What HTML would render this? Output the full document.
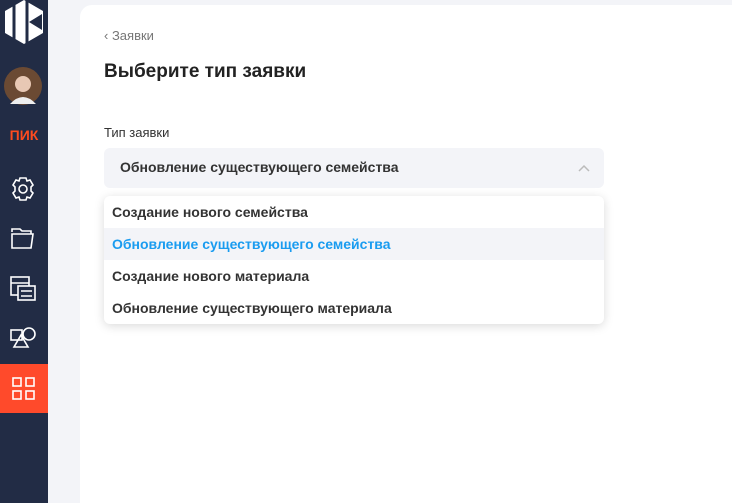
<!DOCTYPE html>
<html><head><meta charset="utf-8"><style>
*{margin:0;padding:0;box-sizing:border-box}
html,body{width:732px;height:503px;overflow:hidden}
body{background:#f3f4f8;font-family:"Liberation Sans",sans-serif;position:relative}
.sb{position:absolute;left:0;top:0;width:48px;height:503px;background:#222c45}
.card{position:absolute;left:80px;top:5px;width:652px;height:498px;background:#fff;border-radius:12px 0 0 0}
.t{position:absolute;white-space:nowrap}
.dd{position:absolute;left:104px;top:196px;width:500px;height:128px;background:#fff;border-radius:6px;box-shadow:0 2px 10px rgba(0,0,0,.15)}
.it{height:32px;line-height:32px;padding-left:8px;font-size:14px;color:#333;font-weight:bold}
</style></head><body>
<div class="sb">
<svg width="48" height="420" viewBox="0 0 48 420" style="position:absolute;left:0;top:0">
<polygon points="24,0 43,11 43,33 24,44 5,33 5,11" fill="#fff"/>
<path d="M14 4v40M27 0v44" stroke="#222c45" stroke-width="3"/>
<polygon points="29,22 42,14 42,30" fill="#222c45"/>
<circle cx="23" cy="86" r="19" fill="#6b4a33"/>
<circle cx="23" cy="84" r="8" fill="#e8c8b4"/>
<path d="M10 104 Q23 90 36 104 Z" fill="#eee"/>
<text x="24" y="140" font-size="14" font-weight="bold" fill="#ff4b1f" text-anchor="middle" font-family="Liberation Sans">ПИК</text>
<g fill="none" stroke="#fff" stroke-width="1.6">
<circle cx="23" cy="189" r="4"/>
<path d="M20 178h6l1 3 3-1 3 5-2 2 0 4 2 2-3 5-3-1-1 3h-6l-1-3-3 1-3-5 2-2 0-4-2-2 3-5 3 1z"/>
<path d="M12 232v-3h8l2 2h9v3M12 234h21l-2 14h-19z"/>
<rect x="11" y="277" width="18" height="18"/><path d="M11 283h18"/>
<rect x="18" y="286" width="17" height="14" fill="#222c45"/><path d="M21 291h11M21 296h11"/>
<rect x="11" y="330" width="11" height="10"/><circle cx="29" cy="334" r="6"/><path d="M21 335l-7 12h14z"/>
</g>
</svg>
<div style="position:absolute;left:0;top:364px;width:48px;height:49px;background:#ff4a2b"></div>
<svg width="48" height="49" style="position:absolute;left:0;top:364px" fill="none" stroke="#fff" stroke-width="1.6">
<rect x="13" y="14" width="8" height="8"/><rect x="26" y="14" width="8" height="8"/><rect x="13" y="27" width="8" height="8"/><rect x="26" y="27" width="8" height="8"/>
</svg>
</div>
<div class="card"></div>
<div class="t" style="left:104px;top:28px;font-size:13px;color:#777">‹ Заявки</div>
<div class="t" style="left:104px;top:61px;font-size:19px;font-weight:bold;color:#222">Выберите тип заявки</div>
<div class="t" style="left:104px;top:125px;font-size:13px;color:#333">Тип заявки</div>
<div style="position:absolute;left:104px;top:148px;width:500px;height:40px;background:#f3f4f8;border-radius:6px"></div>
<div class="t" style="left:120px;top:159px;font-size:14px;font-weight:bold;color:#333">Обновление существующего семейства</div>
<svg width="14" height="10" style="position:absolute;left:577px;top:164px"><path d="M2 7l5-5 5 5" fill="none" stroke="#bbb" stroke-width="1.5"/></svg>
<div class="dd">
<div class="it">Создание нового семейства</div>
<div class="it" style="background:#f3f4f8;color:#1a9cf0">Обновление существующего семейства</div>
<div class="it">Создание нового материала</div>
<div class="it">Обновление существующего материала</div>
</div>
</body></html>
